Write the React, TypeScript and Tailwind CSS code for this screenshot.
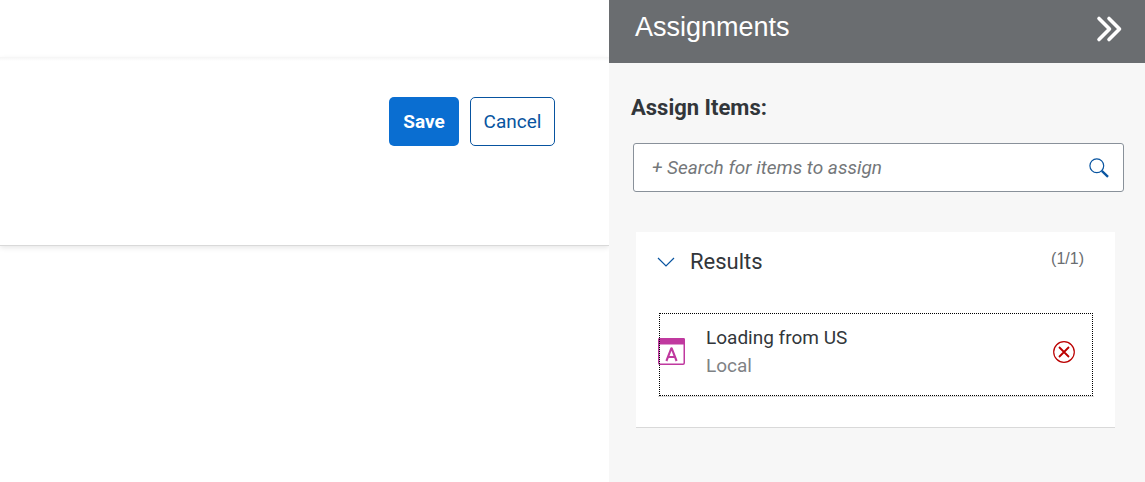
import { useState } from "react";

function CollapseIcon() {
  return (
    <svg width="28" height="28" viewBox="0 0 28 28" fill="none" stroke="currentColor" strokeWidth="3.6" strokeLinecap="round" strokeLinejoin="round" aria-hidden="true">
      <path d="M4 3.5 14.5 14 4 24.5M14 3.5 24.5 14 14 24.5" />
    </svg>
  );
}

function SearchIcon() {
  return (
    <svg width="20" height="20" viewBox="0 0 20 20" fill="none" stroke="currentColor" aria-hidden="true">
      <circle cx="7.8" cy="7.8" r="6.9" strokeWidth="1.2" />
      <path d="M12.8 12.8 19 18.8" strokeWidth="2.3" />
    </svg>
  );
}

function ChevronIcon() {
  return (
    <svg width="18" height="10" viewBox="0 0 18 10" fill="none" stroke="currentColor" strokeWidth="1.2" aria-hidden="true">
      <path d="M1 1 9 9 17 1" />
    </svg>
  );
}

function RemoveIcon() {
  return (
    <svg width="22" height="22" viewBox="0 0 22 22" fill="none" stroke="currentColor" aria-hidden="true">
      <circle cx="11" cy="11" r="10.3" strokeWidth="1.2" />
      <path d="M6 6 16 16M16 6 6 16" strokeWidth="1.8" />
    </svg>
  );
}

function ItemIcon() {
  return (
    <svg width="27" height="27" viewBox="0 0 27 27" fill="none" className="shrink-0" aria-hidden="true">
      <rect x="0.75" y="0.75" width="25.5" height="25.5" rx="1.2" fill="#fff" stroke="#c0399f" strokeWidth="1.5" />
      <path d="M0 1.5Q0 0 1.5 0H25.5Q27 0 27 1.5V6.5H0Z" fill="#c0399f" />
      <path d="M8.4 23 13.3 10.4H13.7L18.6 23M10.2 19H16.8" stroke="#c0399f" strokeWidth="2.1" strokeLinejoin="round" />
    </svg>
  );
}

export default function App() {
  const [query, setQuery] = useState("");
  const [open, setOpen] = useState(true);

  return (
    <div className="flex min-h-screen bg-white font-['Roboto',sans-serif] text-[#32363a]">
      <main className="min-w-0 flex-1 overflow-hidden">
        <div className="h-[57px]" />
        <section className="h-[189px] border-b border-[#d9d9d9] shadow-[0_2px_5px_#e8e8e8]">
          <div className="h-1 bg-linear-to-b from-[#f5f5f5] to-white" />
          <div className="flex justify-end gap-[11px] pt-9 pr-[54px]">
            <button className="h-[49px] w-[70px] rounded-[5px] bg-[#0a6ed1] pt-[2px] text-[19px] font-bold text-white">Save</button>
            <button className="h-[49px] w-[85px] rounded-[5px] border border-[#0854a0] bg-white pt-[2px] text-[19px] text-[#0854a0]">Cancel</button>
          </div>
        </section>
      </main>

      <aside className="w-[536px] shrink-0 bg-[#f7f7f7]">
        <header className="flex h-[63px] items-start justify-between bg-[#6a6d70] pt-3 pr-[22px] pl-[26px] text-white">
          <h1 className="font-['Liberation_Sans',sans-serif] text-[27px] leading-[30px]">Assignments</h1>
          <button aria-label="Collapse panel" className="pt-[3px]">
            <CollapseIcon />
          </button>
        </header>

        <div className="pr-[21px] pl-6">
          <label htmlFor="item-search" className="-ml-[2px] block pt-[31px] text-[22px] leading-7 font-bold">
            Assign Items:
          </label>
          <div className="mt-[21px] flex h-[49px] items-center rounded-[3px] border border-[#89919a] bg-white pr-[14px] pl-[18px]">
            <input
              id="item-search"
              type="text"
              value={query}
              onChange={(e) => setQuery(e.target.value)}
              placeholder="+ Search for items to assign"
              className="min-w-0 flex-1 bg-transparent pt-[2px] text-[19px] italic outline-none placeholder:text-[#74777a]"
            />
            <button aria-label="Search" className="text-[#0854a0]">
              <SearchIcon />
            </button>
          </div>
        </div>

        <section className="mt-10 mr-[30px] ml-[27px] border-b border-[#d9d9d9] bg-white pr-[21px] pb-[30px] pl-[21px]">
          <div className="flex h-[58px] items-center">
            <button aria-label="Toggle results" aria-expanded={open} onClick={() => setOpen(!open)} className="mr-[15px] pt-[2px] text-[#0854a0]">
              <ChevronIcon />
            </button>
            <h2 className="flex-1 pt-[2px] text-[22px] leading-7">Results</h2>
            <span className="pr-[10px] pb-1 font-['Liberation_Sans',sans-serif] text-[16px] leading-6 text-[#6a6d70]">(1/1)</span>
          </div>
          {open && (
            <ul className="pt-[22px] pl-px">
              <li className="flex h-[85px] items-center border-b border-[#d9d9d9] pr-[19px] pb-[5px] outline-1 -outline-offset-2 outline-black outline-dotted">
                <ItemIcon />
                <div className="ml-[21px] flex-1 pt-px text-[19px] leading-7">
                  <p>Loading from US</p>
                  <p className="text-[#7f8285]">Local</p>
                </div>
                <button aria-label="Remove Loading from US" className="text-[#bb0000]">
                  <RemoveIcon />
                </button>
              </li>
            </ul>
          )}
        </section>
      </aside>
    </div>
  );
}
